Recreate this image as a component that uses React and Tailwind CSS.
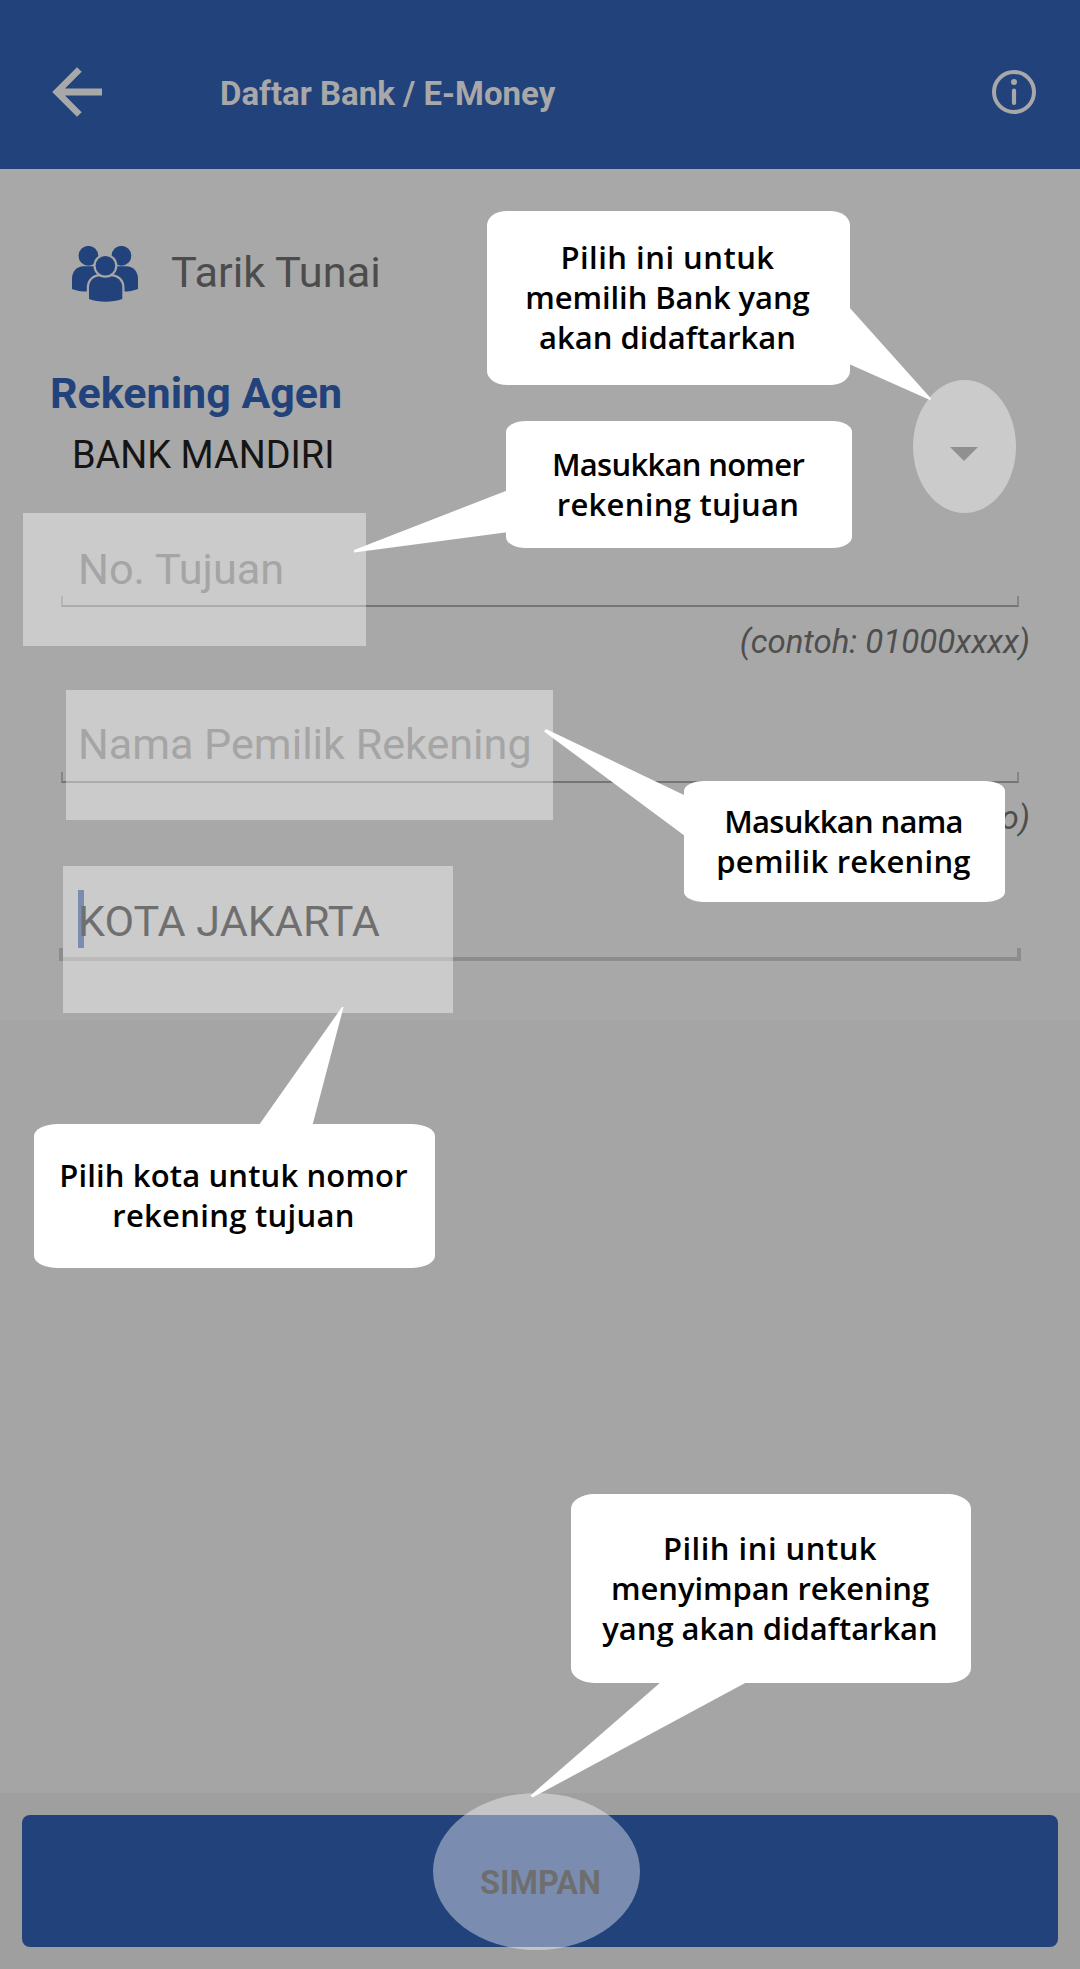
const PAGE_FONT = "font-['Roboto','Noto_Sans',sans-serif]";

function ArrowLeft() {
  return (
    <svg viewBox="0 0 50 50" className="h-[50px] w-[50px]" fill="#a8a8a8">
      <path d="M50 21.5H13L29.700 4.800 25 0.300 0.200 25 25 49.700 29.700 45.200 13 28.500H50z" />
    </svg>
  );
}

function InfoIcon() {
  return (
    <svg viewBox="0 0 44 44" className="h-11 w-11" fill="none" stroke="#a8a8a8" strokeLinecap="round">
      <circle cx="22" cy="22" r="20" strokeWidth="4" />
      <circle cx="22" cy="12" r="3" fill="#a8a8a8" stroke="none" />
      <path d="M22 20.500v12.500" strokeWidth="4.200" />
    </svg>
  );
}

function PeopleIcon() {
  return (
    <svg viewBox="0 0 66 56" className="mt-0.5 h-[56px] w-[66px]" fill="#22427c">
      <circle cx="16.400" cy="9.800" r="9.900" />
      <circle cx="49.400" cy="9.800" r="9.900" />
      <path d="M0 43V32.500C0 25.500 5 20.200 11.500 20.200H22L29 30V45.600H15.500C9 45.600 4 44.600 0 43z" />
      <path d="M66 43V32.500C66 25.500 61 20.200 54.500 20.200H44L37 30V45.600H50.500C57 45.600 62 44.600 66 43z" />
      <path
        d="M17 53V41.500C17 34.500 22 30.200 28.500 30.200H38.500C45 30.200 50.300 34.500 50.300 41.500V53C45 55 39.500 55.700 33.500 55.700S22 55 17 53z"
        stroke="#a8a8a8"
        strokeWidth="4.400"
        paintOrder="stroke"
      />
      <circle cx="33.400" cy="19.800" r="9.800" stroke="#a8a8a8" strokeWidth="4.400" paintOrder="stroke" />
    </svg>
  );
}

function Field({ text, textClass }) {
  return (
    <div className="relative h-[67px] w-[958px]">
      <div className={"pl-[17px] leading-[58px] whitespace-nowrap text-[#696969] " + textClass}>{text}</div>
      <div className="absolute inset-x-0 bottom-0 h-[11px] border-x-2 border-b-2 border-x-[#868686] border-b-[#757575]" />
    </div>
  );
}

function FocusedField({ text }) {
  return (
    <div className="relative h-[67px] w-[958px]">
      <div className="absolute -inset-x-0.5 bottom-0 h-[13px] border-x-4 border-b-4 border-[#8c8c8c]" />
      <div className="absolute -top-1 left-[17px] h-[58px] w-1.5 bg-[#22427c]" />
      <div className="relative pl-[17px] text-[43.1px] leading-[55px] whitespace-nowrap text-[#101010]">{text}</div>
    </div>
  );
}

function Hint({ text }) {
  return (
    <div className="mt-[15px] h-10 w-[969px] text-right text-[33px] leading-10 text-[#4e4e4e] italic">{text}</div>
  );
}

function Callout({ box, lines }) {
  return (
    <div
      className={
        "absolute flex flex-col items-center justify-center bg-white pr-0.5 pb-0.5 font-['Open_Sans','Noto_Sans',sans-serif] text-[31px] leading-10 font-semibold whitespace-nowrap text-black " +
        box
      }
    >
      {lines.map(([text, spacing]) => (
        <div key={text} className={spacing}>
          {text}
        </div>
      ))}
    </div>
  );
}

export default function App() {
  return (
    <div className={"relative flex h-[1969px] w-[1080px] flex-col overflow-hidden bg-[#a5a5a5] " + PAGE_FONT}>
      <header className="flex h-[169px] shrink-0 items-center bg-[#22427c] pt-[15px] pr-11 pl-[52px]">
        <ArrowLeft />
        <h1 className="mt-[3px] ml-[118px] flex-1 text-[33px] leading-10 font-bold text-[#a8a8a8]">
          Daftar Bank / E-Money
        </h1>
        <InfoIcon />
      </header>

      <main className="h-[851px] shrink-0 bg-[#a8a8a8] pt-[74px]">
        <div className="flex h-[60px] items-center pl-[72px] text-[43.3px] text-[#4c4c4c]">
          <PeopleIcon />
          <span className="ml-[33px] leading-[60px]">Tarik Tunai</span>
        </div>
        <h2 className="mt-[65px] pl-[50px] text-[43px] leading-[50px] font-bold text-[#22427c]">Rekening Agen</h2>
        <div className="mt-3 flex h-[50px] items-center justify-between pr-[102px] pl-[72px] text-[37.9px] leading-[50px] text-[#151515]">
          <span className="-mt-px">BANK MANDIRI</span>
          <svg viewBox="0 0 28 14" className="-mt-0.5 h-3.5 w-7" fill="#464646">
            <path d="M0 0h28L14 14z" />
          </svg>
        </div>
        <div className="mt-[60px] pl-[61px]">
          <Field text="No. Tujuan" textClass="pt-px text-[43.3px]" />
          <Hint text="(contoh: 01000xxxx)" />
          <div className="mt-[54px]">
            <Field text="Nama Pemilik Rekening" textClass="text-[43.1px]" />
          </div>
          <Hint text="o)" />
          <div className="mt-[56px]">
            <FocusedField text="KOTA JAKARTA" />
          </div>
        </div>
      </main>

      <div className="flex-1" />

      <footer className="h-[176px] shrink-0 bg-[#9f9f9f] px-[22px] pt-[22px]">
        <button className="block h-[132px] w-full rounded-lg bg-[#22427c] pt-1 pl-px text-[32.5px] font-bold text-[#0e0e0e]">
          SIMPAN
        </button>
      </footer>

      <div className="absolute top-[513px] left-[23px] h-[133px] w-[343px] bg-white/40" />
      <div className="absolute top-[690px] left-[66px] h-[130px] w-[487px] bg-white/40" />
      <div className="absolute top-[866px] left-[63px] h-[147px] w-[390px] bg-white/40" />
      <div className="absolute top-[380px] left-[913px] h-[133px] w-[103px] rounded-[50%] bg-white/40" />
      <div className="absolute top-[1793px] left-[433px] h-[157px] w-[207px] rounded-[50%] bg-white/40" />

      <svg viewBox="0 0 1080 1969" className="absolute inset-0 h-[1969px] w-[1080px]" fill="#fff">
        <path d="M849 307 931 398.500 930 400 849 364z" />
        <path d="M507 490.500 354 550v2.500L507 532.200z" />
        <path d="M685 795.500 546 729 544 731.500 685 836z" />
        <path d="M259 1125 342 1007H343.500L312.500 1125z" />
        <path d="M661 1682 530.500 1795.500 532.500 1797.500 747 1682z" />
      </svg>

      <Callout
        box="top-[211px] left-[487px] h-[174px] w-[363px] rounded-[20px/14px]"
        lines={[
          ["Pilih ini untuk", "tracking-[0.49px]"],
          ["memilih Bank yang", "tracking-[-0.1px]"],
          ["akan didaftarkan", "tracking-normal"],
        ]}
      />
      <Callout
        box="top-[421px] left-[506px] h-[127px] w-[346px] rounded-[20px/11px]"
        lines={[
          ["Masukkan nomer", "tracking-[-0.7px]"],
          ["rekening tujuan", "tracking-[0.3px]"],
        ]}
      />
      <Callout
        box="top-[781px] left-[684px] h-[121px] w-[321px] rounded-[20px/10px]"
        lines={[
          ["Masukkan nama", "tracking-[-0.7px]"],
          ["pemilik rekening", "tracking-[0.25px]"],
        ]}
      />
      <Callout
        box="top-[1124px] left-[34px] h-[144px] w-[401px] rounded-[24px/12px]"
        lines={[
          ["Pilih kota untuk nomor", "tracking-[0.14px]"],
          ["rekening tujuan", "tracking-[0.3px]"],
        ]}
      />
      <Callout
        box="top-[1494px] left-[571px] h-[189px] w-[400px] rounded-[23px/15px]"
        lines={[
          ["Pilih ini untuk", "tracking-[0.49px]"],
          ["menyimpan rekening", "tracking-[-0.05px]"],
          ["yang akan didaftarkan", "tracking-[-0.05px]"],
        ]}
      />
    </div>
  );
}
